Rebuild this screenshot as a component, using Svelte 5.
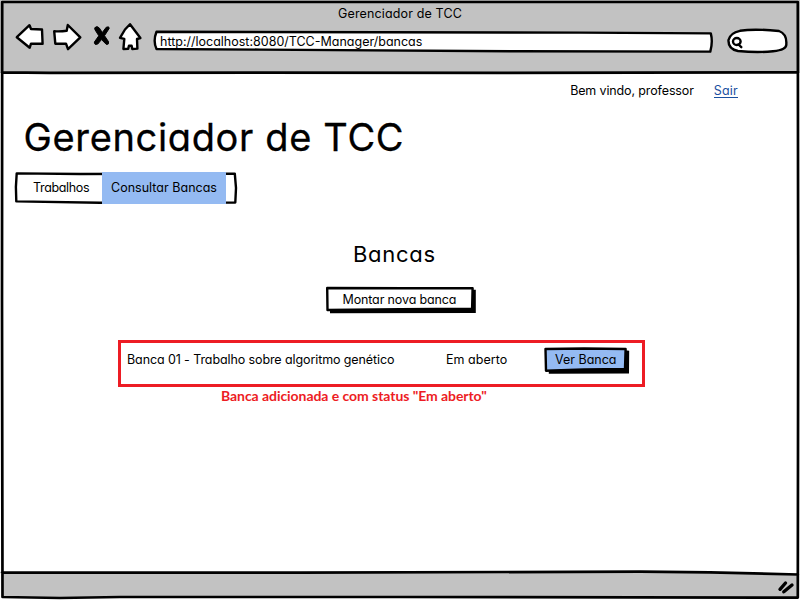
<script>
  const url = 'http://localhost:8080/TCC-Manager/bancas';
  const bancas = [{ nome: 'Banca 01 - Trabalho sobre algoritmo genético', status: 'Em aberto' }];
</script>

<div class="window">
  <header>
    <div class="title">Gerenciador de TCC</div>
    <div class="toolbar">
      <svg class="back" viewBox="14 22 32 30" width="32" height="30"><path d="M16.8 37.2 L29.5 25.2 L31 29 L42 29.5 L42.6 43.8 L31 43.6 L29.7 47.7 Z" /></svg>
      <svg class="forward" viewBox="51 22 32 30" width="32" height="30"><path d="M54.2 31.2 Q60 31.7 66.7 30.8 L67.8 25 L80.3 37.4 L68 49.2 L66 43.6 L55.3 43.7 Z" /></svg>
      <svg class="stop" viewBox="92 22 20 30" width="20" height="30"><path class="blob" d="M95 27.5 Q97 25.5 99.3 28 L102.3 32.5 L106.3 27.2 Q109.5 26 109.2 28.4 L104.5 35.7 L108.6 41.8 Q109 45 106.3 44.4 L101.5 39.6 L97.8 44 Q94 45.5 94.4 42 L98.8 35.8 L95 29.8 Z" /></svg>
      <svg class="home" viewBox="117 22 26 30" width="26" height="30"><path d="M130 24.2 L140.4 38 L137 39 L137.4 48.6 L132.3 49 L131.6 45.8 L129 45.6 L128.2 48.8 L123.4 49 L124.3 38.8 L120 37.8 L125 29.5 Z" /></svg>
      <div class="address">
        <svg viewBox="152 29 564 26" width="564" height="26"><path d="M156.5 31.8 Q380 32 580 32.6 L710.8 33.4 Q713 42 710.3 51.6 L520 51.3 L260 49.6 L156.5 49 Q152.8 41 156.5 31.8 Z" /></svg>
        <span class="url">{url}</span>
      </div>
      <svg class="search" viewBox="726 27 64 28" width="64" height="28">
        <path d="M740 30.8 Q754 28.5 779 31 Q787 34 786.3 44 Q787 50 773 51.2 Q758 53 738 51 Q728 49 728.5 40 Q730 33 740 30.8 Z" />
        <ellipse cx="736.8" cy="41.5" rx="3.8" ry="3.5" /><path d="M738.5 44.5 L741.3 47.2" />
      </svg>
    </div>
  </header>

  <main>
    <div class="session"><span>Bem vindo, professor</span><span class="exit">Sair</span></div>
    <h1>Gerenciador de TCC</h1>
    <nav>
      <svg class="outline" viewBox="14 170 226 36" width="226" height="36"><path d="M16.7 173.4 L80 174 L234.8 173.6 L236 188 L235.3 202.5 L100 202.7 L16.3 201.4 L15.9 187 Z" /></svg>
      <span class="tab works">Trabalhos</span>
      <span class="tab active">Consultar Bancas</span>
    </nav>
    <h2>Bancas</h2>
    <div class="button create">
      <svg class="outline" viewBox="0 0 152 28" width="152" height="28"><path class="shade" d="M5 22 L147 22 L147 3.8 L150.8 3.8 L150.8 27 L5 27.2 Z" /><path d="M2.2 2 L80 2.3 L147.6 2.3 L147.1 22.8 L75 23.2 L2.5 24 Z" /></svg>
      <span>Montar nova banca</span>
    </div>
    {#each bancas as banca}
      <div class="row">
        <span class="name">{banca.nome}</span>
        <span class="status">{banca.status}</span>
        <div class="button view">
          <svg class="outline" viewBox="0 0 86 28" width="86" height="28"><path class="shade" d="M4.8 21 L81 21 L81 3.2 L85.2 3.8 L85 26.6 L4.8 26.8 Z" /><path class="blue" d="M1.5 2 L40 1.5 L81.6 2 L81 22 L40 22.4 L2 23.8 Z" /></svg>
          <span>Ver Banca</span>
        </div>
      </div>
    {/each}
    <p>Banca adicionada e com status "Em aberto"</p>
  </main>

  <footer></footer>

  <svg class="frame" viewBox="0 0 800 600" width="800" height="600">
    <path class="gray" d="M2 572.5 L300 572.7 L640 571.6 L710 572.3 L798 574.5 L798 597 L2 597 Z" />
    <path d="M2.2 2 H797.8 L798.2 300 L797.8 597.6 L400 597 L120 597 L60 598 L2.5 597 L2 300 Z M2 72.4 L50 72.8 L260 72.6 L500 72.9 L798 72.2 M2 572.5 L300 572.7 L640 571.6 L710 572.3 L798 574.5" />
    <path class="grip" d="M780 589.3 L785.5 583 M783.8 591.8 L792 585" />
  </svg>
</div>

<style>
  :global(body) { margin: 0; background: #fff; }
  .window {
    position: relative; width: 800px; height: 600px; display: flex; flex-direction: column; overflow: hidden;
    font: 12.5px/16px Inter, 'Liberation Sans', sans-serif; font-feature-settings: 'cv11'; color: #000;
  }
  svg { display: block; flex: none; overflow: visible; }
  path, ellipse { fill: #fff; stroke: #000; stroke-width: 2.4; stroke-linejoin: round; stroke-linecap: round; }
  header { height: 73px; background: #c2c2c2; box-sizing: border-box; padding-top: 6px; flex: none; }
  .title { text-align: center; letter-spacing: 0.14px; }
  .toolbar { display: flex; align-items: center; height: 30px; padding-left: 14px; }
  .forward { margin-left: 5px; }
  .stop { margin-left: 9px; }
  .home { margin-left: 5px; }
  .blob { fill: #000; stroke-width: 1; }
  .address { display: grid; margin: 9px 0 0 9px; }
  .address > * { grid-area: 1 / 1; }
  .url { position: relative; padding: 5px 0 0 8px; letter-spacing: 0; }
  .search { margin: 7px 0 0 10px; }
  main { flex: 1; display: flex; flex-direction: column; align-items: flex-start; }
  .session { align-self: flex-end; display: flex; margin: 10px 62px 0 0; letter-spacing: -0.13px; }
  .exit { margin-left: 20px; color: #1a50a0; letter-spacing: 0.2px; height: 14px; border-bottom: 1px solid #1a50a0; }
  h1 { margin: 15px 0 0 23.5px; font-size: 38px; line-height: 46px; font-weight: 400; letter-spacing: 0.65px; -webkit-text-stroke: 0.3px #000; }
  nav { position: relative; display: flex; width: 222px; height: 32px; margin: 12px 0 0 15px; }
  .outline { position: absolute; }
  nav .outline { left: -1px; top: -2px; }
  .tab { position: relative; padding-top: 8px; }
  .works { width: 69px; padding-left: 18px; letter-spacing: -0.35px; }
  .active { width: 115px; height: 24px; padding-left: 9px; background: #94baf2; letter-spacing: 0.02px; }
  h2 { margin: 36px 0 0 353px; font-size: 22px; line-height: 28px; font-weight: 400; letter-spacing: 0.7px; }
  .button { position: relative; height: 28px; }
  .button .outline { left: 0; top: 0; }
  .button span { position: relative; display: block; padding-top: 6px; letter-spacing: -0.13px; }
  .create { width: 135px; margin: 18px 0 0 325px; padding-left: 17.5px; }
  .shade { fill: #000; stroke: none; }
  .blue { fill: #94baf2; }
  .row {
    display: flex; box-sizing: border-box; width: 527px; height: 47px; margin: 26px 0 0 118px;
    border: 3px solid #ed1c24; padding: 4px 0 0 6px;
  }
  .name { width: 319px; padding-top: 5px; letter-spacing: -0.1px; }
  .status { width: 98px; padding-top: 5px; letter-spacing: 0.03px; }
  .view { padding-left: 11px; }
  .button.view span { padding-top: 5px; letter-spacing: 0; }
  p { margin: 1px 0 0 221px; font: 700 14px/16px Lato, sans-serif; color: #ed1c24; letter-spacing: -0.06px; }
  footer { height: 25px; flex: none; }
  .frame { position: absolute; inset: 0; pointer-events: none; }
  .frame path { fill: none; stroke-width: 2.7; }
  .frame .gray { fill: #c2c2c2; stroke: none; }
  .frame .grip { stroke-width: 3.4; }
</style>
